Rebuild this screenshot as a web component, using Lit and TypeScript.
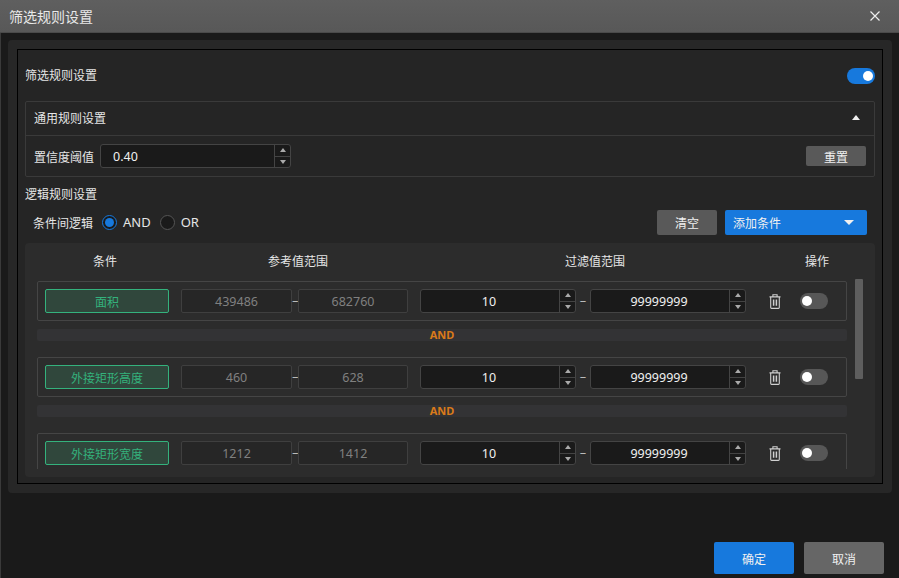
import { LitElement, html, css, nothing } from 'lit';
import { customElement } from 'lit/decorators.js';

const spinner = html`
  <div class="spin">
    <span class="up"><i class="tri-up"></i></span>
    <span class="down"><i class="tri-down"></i></span>
  </div>
`;

const trash = html`
  <svg class="trash" width="12" height="15" viewBox="0 0 12 15" fill="none" stroke="#d0d0d0" stroke-width="1.1">
    <path d="M.5 2.9h11M3.9 2.7V.8h4.2v1.9M1.7 3.1v10.4c0 .6.3.9.8.9h7c.5 0 .8-.3.8-.9V3.1" />
    <path d="M4.6 5.6v6.2M7.4 5.6v6.2" stroke-width="1.5" />
  </svg>
`;

const rows = [
  { name: '面积', refMin: '439486', refMax: '682760' },
  { name: '外接矩形高度', refMin: '460', refMax: '628' },
  { name: '外接矩形宽度', refMin: '1212', refMax: '1412' },
];

@customElement('app-root')
export class AppRoot extends LitElement {
  static styles = css`
    :host {
      display: flex;
      flex-direction: column;
      width: 899px;
      height: 578px;
      overflow: hidden;
      background: #1a1a1a;
      color: #e6e6e6;
      font-family: "Noto Sans CJK SC", "Noto Sans", sans-serif;
      font-size: 12px;
      box-sizing: border-box;
    }
    * { box-sizing: border-box; }
    i { display: block; }

    .titlebar {
      height: 33px;
      flex: none;
      display: flex;
      align-items: center;
      justify-content: space-between;
      padding: 0 19px 0 9px;
      background: linear-gradient(#5f5f5f, #585858);
      border-bottom: 1px solid #4a4a4a;
      font-size: 14px;
      color: #e8e8e8;
    }
    .body {
      flex: 1;
      min-height: 0;
      display: flex;
      flex-direction: column;
      border-left: 1px solid #3a3a3a;
    }
    .panel {
      margin: 7px 7px 0 7px;
      height: 453px;
      padding: 9px 9px 9px 9px;
      background: #272727;
      border-radius: 4px;
    }
    .frame {
      height: 435px;
      border: 1px solid #000;
      background: #252525;
      padding: 0 7px 0 7px;
      display: flex;
      flex-direction: column;
    }
    .head {
      height: 51px;
      flex: none;
      display: flex;
      align-items: center;
      justify-content: space-between;
      font-size: 12px;
    }
    .head > span:first-child { margin-top: -2px; }
    .switch {
      width: 28px;
      height: 16px;
      border-radius: 8px;
      background: #1779dd;
      display: flex;
      align-items: center;
      justify-content: flex-end;
      padding: 0 2px;
      flex: none;
    }
    .switch span {
      width: 10px;
      height: 10px;
      border-radius: 50%;
      background: #fff;
    }
    .switch.off {
      background: #575757;
      justify-content: flex-start;
    }
    .general {
      height: 76px;
      flex: none;
      border: 1px solid #3a3a3a;
      border-radius: 2px;
    }
    .general-head {
      height: 34px;
      display: flex;
      align-items: center;
      justify-content: space-between;
      padding: 0 14px 2px 8px;
      border-bottom: 1px solid #3a3a3a;
    }
    .tri-up, .tri-down {
      width: 0;
      height: 0;
      border-left: 4.5px solid transparent;
      border-right: 4.5px solid transparent;
    }
    .tri-up { border-bottom: 5px solid #f0f0f0; }
    .tri-down { border-top: 5px solid #f0f0f0; }
    .general-body {
      height: 40px;
      display: flex;
      align-items: center;
      padding: 0 8px;
    }
    .general-body label { width: 66px; flex: none; }
    .input {
      height: 24px;
      display: flex;
      align-items: stretch;
      background: #1a1a1a;
      border: 1px solid #444;
      border-radius: 3px;
      color: #f0f0f0;
    }
    .input .val {
      flex: 1;
      display: flex;
      align-items: center;
      justify-content: center;
      padding-right: 2px;
      font-size: 12.5px;
      font-family: "Noto Sans", sans-serif;
    }
    .input.conf { width: 191px; }
    .input.conf .val { justify-content: flex-start; padding-left: 12px; }
    .spin {
      width: 16px;
      flex: none;
      display: flex;
      flex-direction: column;
      border-left: 1px solid #444;
    }
    .spin span {
      flex: 1;
      display: flex;
      align-items: center;
      justify-content: center;
    }
    .spin .up { border-bottom: 1px solid #444; }
    .spin .tri-up { border-bottom-color: #aaa; border-left-width: 3.5px; border-right-width: 3.5px; border-bottom-width: 4px; }
    .spin .tri-down { border-top-color: #aaa; border-left-width: 3.5px; border-right-width: 3.5px; border-top-width: 4px; }
    .btn {
      display: flex;
      align-items: center;
      justify-content: center;
      border-radius: 2px;
      background: #595959;
      color: #f0f0f0;
      flex: none;
    }
    .reset { width: 60px; height: 20px; margin-left: auto; }
    .section-title {
      height: 33px;
      flex: none;
      display: flex;
      align-items: center;
    }
    .logic {
      height: 25px;
      margin-bottom: 8px;
      flex: none;
      display: flex;
      align-items: center;
      padding: 0 8px;
    }
    .logic label { margin-right: 9px; }
    .radio {
      width: 15px;
      height: 15px;
      border-radius: 50%;
      border: 1px solid #555;
      background: #1a1a1a;
      margin: -1px 6px 0 0;
      flex: none;
      display: flex;
      align-items: center;
      justify-content: center;
    }
    .radio.on { border-color: #1779dd; }
    .radio.on span { width: 9px; height: 9px; border-radius: 50%; background: #1779dd; }
    .radio-text {
      margin: -1px 9px 0 0;
      font-family: "Noto Sans", sans-serif;
      font-size: 13px;
    }
    .clear { width: 60px; height: 25px; margin-left: auto; }
    .add {
      width: 142px;
      height: 25px;
      margin: 0 0 0 8px;
      background: #1779dd;
      justify-content: space-between;
      padding: 0 13px 0 8px;
    }
    .add .tri-down { border-left-width: 5px; border-right-width: 5px; border-top-width: 5px; }
    .table {
      height: 234px;
      flex: none;
      background: #2c2c2c;
      border-radius: 4px;
      padding: 0 12px;
      display: flex;
      flex-direction: column;
    }
    .thead {
      height: 36px;
      flex: none;
      display: flex;
      align-items: center;
      padding-bottom: 2px;
    }
    .thead span { text-align: center; flex: none; }
    .c1 { width: 136px; }
    .c2 { width: 250px; }
    .c3 { width: 344px; }
    .c4 { width: 100px; }
    .tbody {
      height: 190px;
      flex: none;
      display: flex;
      gap: 8px;
      overflow: hidden;
    }
    .list {
      width: 810px;
      flex: none;
      display: flex;
      flex-direction: column;
      padding-top: 2px;
    }
    .row {
      height: 40px;
      flex: none;
      border: 1px solid #454545;
      border-radius: 2px;
      display: flex;
      align-items: center;
      padding: 0 7px;
    }
    .tag {
      width: 124px;
      height: 24px;
      flex: none;
      margin-right: 12px;
      border: 1px solid #34b27d;
      border-radius: 2px;
      background: #30473c;
      color: #34b27d;
      display: flex;
      align-items: center;
      justify-content: center;
    }
    .ref {
      width: 111px;
      height: 24px;
      flex: none;
      display: flex;
      align-items: center;
      justify-content: center;
      background: #262626;
      border: 1px solid #3f3f3f;
      border-radius: 2px;
      color: #808080;
      font-family: "Noto Sans", sans-serif;
      font-size: 12.5px;
    }
    .ref.max { width: 110px; }
    .dash {
      width: 6px;
      flex: none;
      text-align: center;
      color: #ddd;
      padding-bottom: 3px;
    }
    .input.filter { width: 156px; flex: none; }
    .dash.wide { width: 14px; }
    .gap { width: 12px; flex: none; }
    .trash { margin: 0 19px 0 23px; flex: none; }
    .and {
      height: 12px;
      flex: none;
      margin: 8px 0 16px;
      padding-bottom: 2px;
      background: #333335;
      border-radius: 2px;
      display: flex;
      align-items: center;
      justify-content: center;
      color: #d97a1a;
      font-weight: 700;
      font-size: 11px;
      font-family: "Noto Sans", sans-serif;
    }
    .scroll {
      width: 8px;
      height: 100px;
      border-radius: 1px;
      background: #5e5e5e;
      flex: none;
    }
    .footer {
      flex: 1;
      display: flex;
      justify-content: flex-end;
      align-items: flex-end;
      gap: 10px;
      padding: 0 15px 4px 0;
    }
    .footer .btn { width: 80px; height: 32px; }
    .ok { background: #1779dd; }
    .cancel { background: #666; }
  `;

  renderRow(r: { name: string; refMin: string; refMax: string }) {
    return html`
      <div class="row">
        <div class="tag">${r.name}</div>
        <div class="ref">${r.refMin}</div>
        <div class="dash">–</div>
        <div class="ref max">${r.refMax}</div>
        <div class="gap"></div>
        <div class="input filter"><div class="val">10</div>${spinner}</div>
        <div class="dash wide">–</div>
        <div class="input filter"><div class="val">99999999</div>${spinner}</div>
        ${trash}
        <div class="switch off"><span></span></div>
      </div>
    `;
  }

  render() {
    return html`
      <div class="titlebar">
        <span>筛选规则设置</span>
        <svg width="10" height="10" viewBox="0 0 10 10" stroke="#eee" stroke-width="1.2" fill="none">
          <path d="M.5.5l9 9M9.5.5l-9 9" />
        </svg>
      </div>
      <div class="body">
        <div class="panel">
          <div class="frame">
            <div class="head">
              <span>筛选规则设置</span>
              <div class="switch"><span></span></div>
            </div>
            <div class="general">
              <div class="general-head">
                <span>通用规则设置</span>
                <i class="tri-up"></i>
              </div>
              <div class="general-body">
                <label>置信度阈值</label>
                <div class="input conf"><div class="val">0.40</div>${spinner}</div>
                <div class="btn reset">重置</div>
              </div>
            </div>
            <div class="section-title">逻辑规则设置</div>
            <div class="logic">
              <label>条件间逻辑</label>
              <div class="radio on"><span></span></div>
              <span class="radio-text">AND</span>
              <div class="radio"></div>
              <span class="radio-text">OR</span>
              <div class="btn clear">清空</div>
              <div class="btn add">添加条件<i class="tri-down"></i></div>
            </div>
            <div class="table">
              <div class="thead">
                <span class="c1">条件</span>
                <span class="c2">参考值范围</span>
                <span class="c3">过滤值范围</span>
                <span class="c4">操作</span>
              </div>
              <div class="tbody">
                <div class="list">
                  ${rows.map(
                    (r, i) => html`
                      ${this.renderRow(r)}
                      ${i < rows.length - 1 ? html`<div class="and">AND</div>` : nothing}
                    `
                  )}
                </div>
                <div class="scroll"></div>
              </div>
            </div>
          </div>
        </div>
        <div class="footer">
          <div class="btn ok">确定</div>
          <div class="btn cancel">取消</div>
        </div>
      </div>
    `;
  }
}
